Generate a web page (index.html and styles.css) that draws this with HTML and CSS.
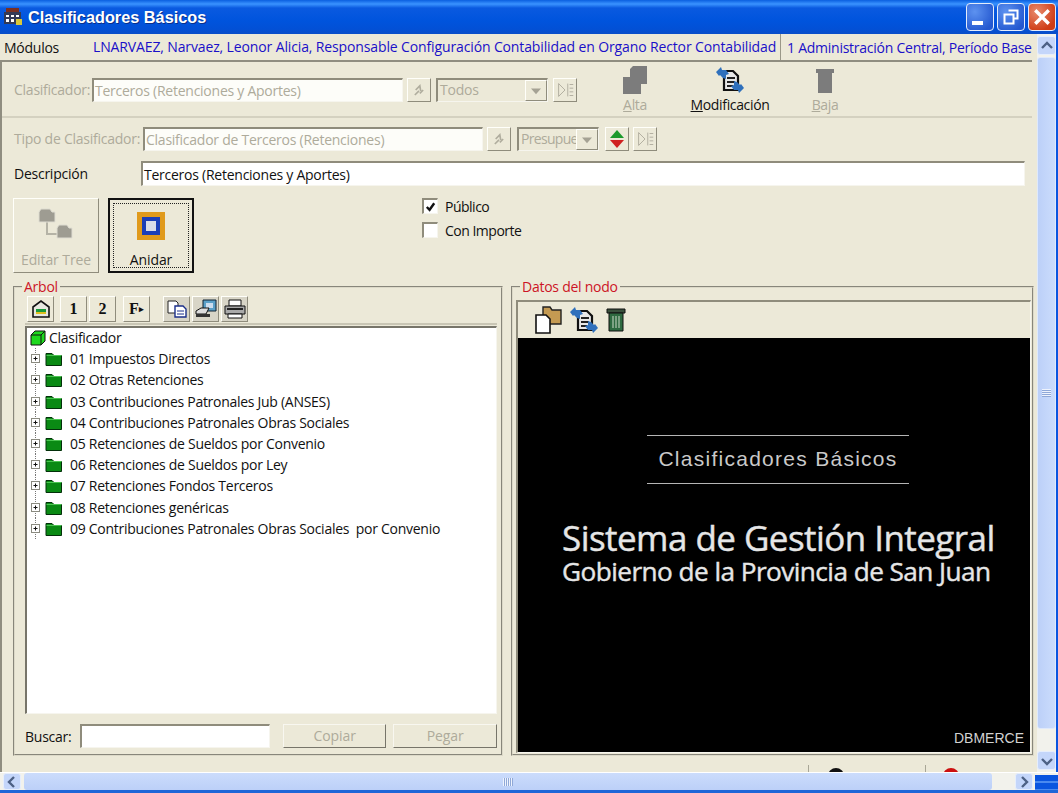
FILE: index.html
```html
<!DOCTYPE html>
<html lang="es">
<head>
<meta charset="utf-8">
<title>Clasificadores Básicos</title>
<link rel="stylesheet" href="styles.css">
</head>
<body>
<svg class="defs" width="0" height="0">
  <defs>
    <symbol id="plusfolder" viewBox="0 0 36 21">
      <path d="M5.5 0V21" stroke="#777" stroke-dasharray="1 1"/>
      <rect x="1.5" y="6.5" width="8" height="8" fill="#fff" stroke="#8a8a80"/>
      <path d="M3.5 10.5h4M5.5 8.5v4" stroke="#111"/>
      <path d="M16 5.5h6l2 2h7.5v10H16z" fill="#0a8a14" stroke="#03300a"/>
      <path d="M16.5 7.5h15" stroke="#4cc552"/>
    </symbol>
    <symbol id="swap" viewBox="0 0 28 28">
      <path d="M8 5h9l5 5v14H8z" fill="#e8e8e8" stroke="#111" stroke-width="2.2"/>
      <path d="M11 12h8M11 16h8M11 20h6" stroke="#222" stroke-width="2"/>
      <path d="M0 6l5-5 1 3 4 0 3 4-3 1 0 4-3-1-3-3-1 1z" fill="#2f70bc"/>
      <path d="M28 22l-5 5-1-3-4 0-3-4 3-1 0-4 3 1 3 3 1-1z" fill="#2f70bc"/>
    </symbol>
    <symbol id="redo" viewBox="0 0 24 24">
      <path d="M7 18l5-5M8 12l5-5 1 6M13 16l4-4" stroke="#b0ad9e" stroke-width="2" fill="none"/>
    </symbol>
    <symbol id="list" viewBox="0 0 24 24">
      <path d="M5 5l7 7-7 7z" fill="none" stroke="#aeab9c"/>
      <path d="M15 5v14M17 6h4M17 10h4M17 14h4M17 18h4" stroke="#aeab9c"/>
    </symbol>
    <symbol id="down" viewBox="0 0 24 24">
      <path d="M6 9h12l-6 7z" fill="#a5a294"/>
    </symbol>
  </defs>
</svg>
<div class="window">
  <header class="titlebar">
    <svg class="appicon" viewBox="0 0 20 18" width="20" height="18" aria-hidden="true">
      <rect x="3" y="0" width="13" height="4" fill="#7a3020"/>
      <rect x="1" y="4" width="17" height="12" fill="#333a55"/>
      <path d="M3 7h3v2H3zM8 7h3v2H8zM13 7h3v2h-3zM3 11h3v3H3zM8 11h3v3H8z" fill="#fff"/>
      <rect x="13" y="11" width="6" height="6" fill="#d8c838"/>
    </svg>
    <h1 class="title">Clasificadores Básicos</h1>
    <div class="winbtns">
      <span class="winbtn"><i class="minglyph"></i></span>
      <span class="winbtn"><svg viewBox="0 0 16 16" width="16" height="16"><path d="M5.5 1.5h9v8h-3M1.5 5.5h9v9h-9z" fill="none" stroke="#fff" stroke-width="2"/></svg></span>
      <span class="winbtn close"><svg viewBox="0 0 16 16" width="18" height="18"><path d="M2 2l12 12M14 2L2 14" stroke="#fff" stroke-width="3"/></svg></span>
    </div>
  </header>
  <div class="middle">
    <main class="content">
      <nav class="menu">
        <span class="modules">Módulos</span>
        <span class="user">LNARVAEZ, Narvaez, Leonor Alicia, Responsable Configuración Contabilidad en Organo Rector Contabilidad</span>
        <span class="period">1 Administración Central, Período Base</span>
      </nav>
      <div class="panel">
        <section class="row-one">
          <span class="label dim lbl-clas">Clasificador:</span>
          <span class="input dis w-clas">Terceros (Retenciones y Aportes)</span>
          <span class="tool-btn m-a"><svg width="20" height="20"><use href="#redo"/></svg></span>
          <span class="select w-sel1"><span class="seltext">Todos</span><span class="selarrow"><svg width="20" height="20"><use href="#down"/></svg></span></span>
          <span class="tool-btn m-b"><svg width="22" height="22"><use href="#list"/></svg></span>
          <div class="actions">
            <div class="action a-alta">
              <svg width="26" height="28" viewBox="0 0 26 28"><path d="M8 3l3-3h14v18h-6v10H1V11h7z" fill="#7c7c7c"/></svg>
              <span class="dim"><u>A</u>lta</span>
            </div>
            <div class="action a-mod">
              <svg width="28" height="28"><use href="#swap"/></svg>
              <span><u>M</u>odificación</span>
            </div>
            <div class="action a-baja">
              <svg width="20" height="28" viewBox="0 0 20 28"><path d="M1 3h18v4H1zM3 7h14v20H3z" fill="#7c7c7c"/></svg>
              <span class="dim"><u>B</u>aja</span>
            </div>
          </div>
        </section>
        <section class="row-two">
          <span class="label dim lbl-tipo">Tipo de Clasificador:</span>
          <span class="input dis w-tipo">Clasificador de Terceros (Retenciones)</span>
          <span class="tool-btn m-a"><svg width="20" height="20"><use href="#redo"/></svg></span>
          <span class="select w-sel2"><span class="seltext tight">Presupue</span><span class="selarrow"><svg width="20" height="20"><use href="#down"/></svg></span></span>
          <span class="tool-btn m-c"><svg width="18" height="20" viewBox="0 0 18 20"><path d="M9 1l7 8H2z" fill="#1c9a2c"/><path d="M9 19l7-8H2z" fill="#d02020"/></svg></span>
          <span class="tool-btn m-d"><svg width="22" height="22"><use href="#list"/></svg></span>
        </section>
        <section class="row-three">
          <span class="label lbl-desc">Descripción</span>
          <span class="input w-desc">Terceros (Retenciones y Aportes)</span>
        </section>
        <section class="row-four">
          <div class="bigbtn">
            <svg width="40" height="36" viewBox="0 0 40 36"><path d="M11 14v14h12" fill="none" stroke="#b5b3a6" stroke-width="2"/><path d="M3 6l2-3h9l2 3h3v10H3z" fill="#9e9c92" stroke="#dfddd2"/><path d="M21 22l2-3h8l2 3h3v10H21z" fill="#9e9c92" stroke="#dfddd2"/></svg>
            <span class="dim">Editar Tree</span>
          </div>
          <div class="bigbtn focused">
            <div class="focusring">
              <svg width="28" height="28" viewBox="0 0 28 28"><rect width="28" height="28" fill="#e09a1c"/><rect x="5" y="5" width="18" height="18" fill="#1b3fb8"/><rect x="9" y="9" width="10" height="10" fill="#d8dce8"/></svg>
              <span class="focus-label">Anidar</span>
            </div>
          </div>
          <div class="checks">
            <label class="check"><span class="box"><svg width="14" height="14" viewBox="0 0 14 14"><path d="M3 7l3 3 5-7" fill="none" stroke="#111" stroke-width="2.6"/></svg></span>Público</label>
            <label class="check"><span class="box"></span>Con Importe</label>
          </div>
        </section>
        <section class="groups">
          <fieldset class="group tree-group">
            <legend>Arbol</legend>
            <div class="toolbar">
              <span class="tb"><svg width="20" height="20" viewBox="0 0 20 20"><path d="M2 8l8-6 8 6v10H2z" fill="#e8e8e0" stroke="#111" stroke-width="1.6"/><path d="M5 10h10v3H5z" fill="#1a9a3a"/><path d="M5 13h10v2H5z" fill="#e0c020"/></svg></span>
              <span class="tb num t-g1">1</span>
              <span class="tb num">2</span>
              <span class="tb num t-g2">F<small>▸</small></span>
              <span class="tb shade t-g3"><svg width="20" height="18" viewBox="0 0 20 18"><path d="M1 1h8l2 2v10H1z" fill="#fff" stroke="#222"/><path d="M8 6h8l3 3v8H8z" fill="#fff" stroke="#1b2f8a" stroke-width="1.4"/><path d="M10 11h7M10 14h7" stroke="#1b2f8a"/></svg></span>
              <span class="tb shade"><svg width="22" height="20" viewBox="0 0 22 20"><path d="M8 1h13v11H8z" fill="#5aa0c8" stroke="#123"/><path d="M11 4h7v5h-7z" fill="#cde"/><path d="M1 12l5-3h8l-3 6H1z" fill="#ddd" stroke="#111"/><path d="M1 15h14v3H1z" fill="#333"/></svg></span>
              <span class="tb shade"><svg width="22" height="20" viewBox="0 0 22 20"><path d="M5 1h12v6H5z" fill="#fff" stroke="#111"/><path d="M1 7h20v8H1z" fill="#aaa" stroke="#111"/><path d="M4 15h14v4H4z" fill="#fff" stroke="#111"/><path d="M3 10h16" stroke="#222" stroke-width="2"/></svg></span>
            </div>
            <div class="tree">
              <div class="node root">
                <svg width="16" height="16" viewBox="0 0 16 16"><path d="M1 5l4-4h10v10l-4 4H1z" fill="#1ed81e" stroke="#111"/><path d="M1 5h10v10M11 5l4-4" fill="none" stroke="#111"/></svg>
                <span>Clasificador</span>
              </div>
              <div class="node"><svg width="36" height="21"><use href="#plusfolder"/></svg><span>01 Impuestos Directos</span></div>
              <div class="node"><svg width="36" height="21"><use href="#plusfolder"/></svg><span>02 Otras Retenciones</span></div>
              <div class="node"><svg width="36" height="21"><use href="#plusfolder"/></svg><span>03 Contribuciones Patronales Jub (ANSES)</span></div>
              <div class="node"><svg width="36" height="21"><use href="#plusfolder"/></svg><span>04 Contribuciones Patronales Obras Sociales</span></div>
              <div class="node"><svg width="36" height="21"><use href="#plusfolder"/></svg><span>05 Retenciones de Sueldos por Convenio</span></div>
              <div class="node"><svg width="36" height="21"><use href="#plusfolder"/></svg><span>06 Retenciones de Sueldos por Ley</span></div>
              <div class="node"><svg width="36" height="21"><use href="#plusfolder"/></svg><span>07 Retenciones Fondos Terceros</span></div>
              <div class="node"><svg width="36" height="21"><use href="#plusfolder"/></svg><span>08 Retenciones genéricas</span></div>
              <div class="node"><svg width="36" height="21"><use href="#plusfolder"/></svg><span>09 Contribuciones Patronales Obras Sociales&nbsp; por Convenio</span></div>
            </div>
            <div class="search">
              <span class="label">Buscar:</span>
              <span class="input w-search"></span>
              <span class="flatbtn dim">Copiar</span>
              <span class="flatbtn dim">Pegar</span>
            </div>
          </fieldset>
          <fieldset class="group node-group">
            <legend>Datos del nodo</legend>
            <div class="viewer">
              <div class="viewer-tools">
                <svg width="28" height="28" viewBox="0 0 28 28"><path d="M9 1h7l2 3h9v14H9z" fill="#c49a52" stroke="#222" stroke-width="1.4"/><path d="M2 9h10l4 4v14H2z" fill="#fff" stroke="#111" stroke-width="1.6"/></svg>
                <svg width="28" height="28"><use href="#swap"/></svg>
                <svg width="20" height="24" viewBox="0 0 20 24"><path d="M1 1h18v4H1z" fill="#39503c" stroke="#111"/><path d="M3 5h14v18H3z" fill="#2e6a40" stroke="#111"/><path d="M7 8v12M10 8v12M13 8v12" stroke="#a8c0a8" stroke-width="1.3"/></svg>
              </div>
              <div class="splash">
                <div class="splash-head"><span>Clasificadores Básicos</span></div>
                <p class="splash-main">Sistema de Gestión Integral</p>
                <p class="splash-sub">Gobierno de la Provincia de San Juan</p>
                <p class="splash-brand">DBMERCE</p>
              </div>
            </div>
          </fieldset>
        </section>
        <footer class="status">
          <span class="stat s1"><i class="arc"></i></span>
          <span class="stat s2"><i class="arc red"></i></span>
        </footer>
      </div>
    </main>
    <aside class="vscroll">
      <span class="sbtn"><svg width="14" height="14" viewBox="0 0 14 14"><path d="M2 9l5-5 5 5" fill="none" stroke="#4d6185" stroke-width="2.4"/></svg></span>
      <span class="vthumb"><i></i></span>
      <span class="sbtn"><svg width="14" height="14" viewBox="0 0 14 14"><path d="M2 5l5 5 5-5" fill="none" stroke="#4d6185" stroke-width="2.4"/></svg></span>
    </aside>
  </div>
  <div class="hscroll">
    <span class="sbtn"><svg width="14" height="14" viewBox="0 0 14 14"><path d="M9 2L4 7l5 5" fill="none" stroke="#4d6185" stroke-width="2.4"/></svg></span>
    <span class="hthumb"><i></i></span>
    <span class="sbtn right"><svg width="14" height="14" viewBox="0 0 14 14"><path d="M5 2l5 5-5 5" fill="none" stroke="#4d6185" stroke-width="2.4"/></svg></span>
    <span class="corner"></span>
  </div>
  <div class="bottomstrip"></div>
</div>
</body>
</html>
```
FILE: styles.css
```css
* { box-sizing: border-box; }
html, body { margin: 0; padding: 0; overflow: hidden; }
body { font-family: "Open Sans", "Liberation Sans", sans-serif; font-size: 14px; color: #111; background: #ece9d8; }
.defs { display: block; height: 0; }
.window { width: 1058px; height: 793px; display: flex; flex-direction: column; overflow: hidden; background: #ece9d8; }

.titlebar { height: 34px; flex: none; display: flex; align-items: center; padding: 0 2px 0 3px; background: linear-gradient(#0a5fe0 0, #3a93ff 4px, #0a5ae0 8px, #0054dd 60%, #0250d6 85%, #0a4ec8 100%); }
.appicon { flex: none; }
.title { margin: 0 0 0 5px; font-family: "Liberation Sans", sans-serif; font-size: 16.3px; font-weight: bold; color: #fff; text-shadow: 1px 1px 0 #0a2f8a; white-space: nowrap; }
.winbtns { margin-left: auto; display: flex; gap: 3px; }
.winbtn { width: 28px; height: 28px; border: 1px solid #e4ecfb; border-radius: 4px; background: radial-gradient(circle at 30% 30%, #5d92f0, #2458d0 80%); display: flex; align-items: center; justify-content: center; }
.winbtn.close { background: radial-gradient(circle at 30% 30%, #e88a6c, #cf3c16 75%); }
.minglyph { width: 11px; height: 4px; background: #fff; margin: 12px 6px 0 0; }

.middle { flex: 1; min-height: 0; display: flex; border-right: 2px solid #0a55df; }
.content { width: 1037px; flex: none; display: flex; flex-direction: column; }

.menu { height: 28px; flex: none; margin-right: 5px; display: flex; align-items: center; font-size: 14px; border-bottom: 2px solid #8f8d80; letter-spacing: -0.25px; white-space: nowrap; }
.modules { width: 93px; padding-left: 4px; }
.user { color: #1a10c8; width: 688px; border-right: 1px solid #9a9888; line-height: 26px; letter-spacing: -0.13px; }
.period { color: #1a10c8; padding-left: 6px; }

.panel { flex: 1; min-height: 0; border-left: 2px solid #8f8d80; display: flex; flex-direction: column; }

.label { white-space: nowrap; letter-spacing: -0.25px; }
.dim { color: #aeab9b; }
.input { display: block; height: 24px; line-height: 20px; padding: 1px 1px; background: #fff; border-style: solid; border-width: 2px 1px 1px 2px; border-color: #8f8c7c #f6f5ee #f6f5ee #8f8c7c; white-space: nowrap; overflow: hidden; letter-spacing: -0.25px; }
.input.dis { color: #aeab9b; background: #fdfdf9; }
.tool-btn { width: 24px; height: 24px; flex: none; display: flex; align-items: center; justify-content: center; background: #ece9d8; border: 1px solid; border-color: #fffffa #8f8c7c #8f8c7c #fffffa; }
.select { display: flex; height: 24px; flex: none; border-style: solid; border-width: 2px 1px 1px 2px; border-color: #8f8c7c #f6f5ee #f6f5ee #8f8c7c; background: #ece9d8; }
.seltext { flex: 1; min-width: 0; white-space: nowrap; padding: 0 2px; color: #aeab9b; line-height: 20px; letter-spacing: -0.2px; }
.seltext.tight { letter-spacing: -0.7px; }
.selarrow { width: 22px; flex: none; display: flex; align-items: center; justify-content: center; background: #ece9d8; border: 1px solid; border-color: #fffffa #8f8c7c #8f8c7c #fffffa; }

.row-one { height: 56px; flex: none; margin-right: 5px; display: flex; align-items: flex-start; padding: 16px 0 0 12px; border-bottom: 2px solid #d4d1c0; }
.lbl-clas { width: 78px; line-height: 24px; }
.w-clas { width: 311px; }
.m-a { margin-left: 4px; }
.w-sel1 { width: 112px; margin-left: 5px; }
.m-b { margin-left: 5px; }
.actions { display: flex; margin-left: 44px; margin-top: -12px; }
.action { display: flex; flex-direction: column; align-items: center; gap: 2px; font-size: 14px; letter-spacing: -0.35px; white-space: nowrap; }
.action > span { line-height: 18px; }
.a-alta { width: 28px; }
.a-mod { width: 78px; margin-left: 42px; }
.a-baja { width: 30px; margin-left: 41px; }

.row-two { height: 39px; flex: none; display: flex; align-items: flex-start; padding: 9px 0 0 12px; }
.lbl-tipo { width: 129px; line-height: 24px; }
.w-tipo { width: 340px; }
.w-sel2 { width: 82px; margin-left: 6px; }
.m-c { margin-left: 6px; }
.m-d { margin-left: 4px; }

.row-three { height: 39px; flex: none; display: flex; align-items: flex-start; padding: 4px 0 0 12px; }
.lbl-desc { width: 127px; line-height: 25px; }
.w-desc { width: 884px; height: 25px; line-height: 21px; }

.row-four { height: 84px; flex: none; display: flex; align-items: flex-start; padding: 2px 0 0 11px; }
.bigbtn { width: 86px; height: 75px; display: flex; flex-direction: column; align-items: center; justify-content: space-between; padding: 7px 0 3px; background: #ece9d8; border: 1px solid; border-color: #fffffa #8f8c7c #8f8c7c #fffffa; white-space: nowrap; letter-spacing: -0.1px; font-size: 14px; }
.bigbtn.focused { margin-left: 9px; width: 86px; padding: 3px; border: 2px solid #111; }
.focusring { width: 100%; height: 100%; border: 1px dotted #222; display: flex; flex-direction: column; align-items: center; justify-content: space-between; padding: 8px 0 0; line-height: 18px; }
.focus-label { margin-bottom: -2px; }
.checks { margin-left: 228px; display: flex; flex-direction: column; gap: 8px; }
.check { display: flex; align-items: center; gap: 7px; height: 16px; letter-spacing: -0.5px; white-space: nowrap; }
.box { width: 16px; height: 16px; flex: none; background: #fff; border-style: solid; border-width: 2px 1px 1px 2px; border-color: #8f8c7c #f6f5ee #f6f5ee #8f8c7c; display: flex; align-items: center; justify-content: center; }

.groups { height: 477px; flex: none; display: flex; padding-left: 11px; gap: 8px; margin-top: -1px; }
.group { margin: 0; padding: 0; min-width: 0; border: 2px groove #dcd9c8; }
.group legend { color: #cc1426; padding: 0 2px; margin-left: 7px; line-height: 16px; letter-spacing: -0.25px; }
.tree-group { width: 490px; display: flex; flex-direction: column; }
.node-group { width: 523px; }

.toolbar { display: flex; height: 30px; border-bottom: 2px solid #c9c6b5; margin: 0 4px 0 10px; padding: 1px 0 0 2px; }
.tb { width: 27px; height: 26px; flex: none; display: flex; align-items: center; justify-content: center; margin-right: 2px; background: #ece9d8; border: 1px solid; border-color: #fffffa #8f8c7c #8f8c7c #fffffa; }
.num { font-family: "Liberation Serif", serif; font-weight: bold; font-size: 16px; }
.num small { font-size: 9px; }
.t-g1 { margin-left: 4px; }
.t-g2 { margin-left: 5px; }
.t-g3 { margin-left: 11px; }
.shade { background: #d8d5c7; }

.tree { height: 388px; margin: 1px 4px 0 10px; background: #fff; border-style: solid; border-width: 2px 1px 1px 2px; border-color: #77756a #f6f5ee #f6f5ee #77756a; letter-spacing: -0.28px; white-space: nowrap; }
.node { height: 21.2px; display: flex; align-items: center; padding-left: 3px; line-height: 21px; }
.node > svg { flex: none; margin-right: 4px; }
.node.root { margin-top: -1px; }
.node.root > svg { margin-right: 3px; }

.search { display: flex; align-items: center; height: 24px; margin: 10px 4px 0 10px; }
.search .label { width: 55px; }
.w-search { width: 191px; height: 24px; }
.flatbtn { width: 104px; height: 24px; margin-left: 13px; text-align: center; line-height: 22px; border: 1px solid; border-color: #f8f7f0 #77756a #77756a #f8f7f0; letter-spacing: -0.1px; }
.flatbtn + .flatbtn { margin-left: 7px; }

.viewer { margin: 5px 1px 0 3px; display: flex; flex-direction: column; height: 453px; border-style: solid; border-width: 2px 1px 1px 2px; border-color: #8f8c7c #f6f5ee #f6f5ee #8f8c7c; }
.viewer-tools { height: 36px; flex: none; display: flex; align-items: center; gap: 8px; padding: 0 0 0 16px; }
.splash { flex: 1; background: #000; color: #e6e6e6; display: flex; flex-direction: column; padding: 97px 6px 4px 44px; font-family: "Liberation Sans", sans-serif; }
.splash p { margin: 0; white-space: nowrap; }
.splash-head { width: 262px; margin-left: 85px; height: 49px; border-top: 1px solid #b5b5b5; border-bottom: 1px solid #b5b5b5; text-align: center; line-height: 46px; font-size: 21px; letter-spacing: 1.27px; color: #c9c9c9; }
.splash .splash-main { margin-top: 35px; font-size: 35px; line-height: 38px; font-family: "Open Sans", sans-serif; letter-spacing: -0.55px; -webkit-text-stroke: 0.4px #e6e6e6; }
.splash-sub { font-size: 26.2px; line-height: 28px; font-family: "Open Sans", sans-serif; letter-spacing: -0.55px; -webkit-text-stroke: 0.4px #e6e6e6; }
.splash .splash-brand { margin-top: auto; text-align: right; font-size: 14px; line-height: 20px; color: #d2d2d2; }

.status { flex: 1; display: flex; overflow: hidden; }
.stat { flex: none; height: 14px; margin-top: 9px; border-left: 1px solid #a8a696; display: flex; }
.s1 { width: 117px; margin-left: 806px; }
.s2 { width: 100px; }
.arc { display: block; width: 16px; height: 16px; border-radius: 50%; background: #111; margin: 3px 0 0 19px; }
.arc.red { background: #cc1010; margin-left: 17px; }

.vscroll { width: 19px; flex: none; display: flex; flex-direction: column; background: #f2f2ec; padding: 2px 0; align-items: stretch; }
.sbtn { height: 19px; width: 19px; flex: none; display: flex; align-items: center; justify-content: center; background: #c4d6fa; border: 1px solid #e6eefc; border-radius: 3px; }
.vthumb { flex: 1; margin: 2px 0 22px; background: linear-gradient(90deg, #bcd0f8, #cbdcfc); border: 1px solid #dfe9fb; border-radius: 3px; display: flex; align-items: center; justify-content: center; }
.vthumb i { width: 9px; height: 8px; background: repeating-linear-gradient(#eef3fd 0 1px, #8fa8d8 1px 2px); }

.hscroll { height: 18px; flex: none; display: flex; background: #f2f2ec; padding-left: 3px; border-top: 1px solid #fff; }
.hscroll .sbtn { height: 17px; width: 18px; }
.hthumb { width: 968px; margin-left: 3px; background: linear-gradient(#cbdcfc, #bcd0f8); border-radius: 3px; display: flex; align-items: center; justify-content: center; }
.hthumb i { width: 10px; height: 8px; background: repeating-linear-gradient(90deg, #eef3fd 0 1px, #8fa8d8 1px 2px); }
.sbtn.right { margin-left: 23px; }
.corner { flex: 1; margin: 2px 0 0 2px; background: repeating-linear-gradient(#0a55df 0 6px, #4a8af0 6px 8px); }
.bottomstrip { height: 3px; flex: none; background: #1f66d8; }
```
